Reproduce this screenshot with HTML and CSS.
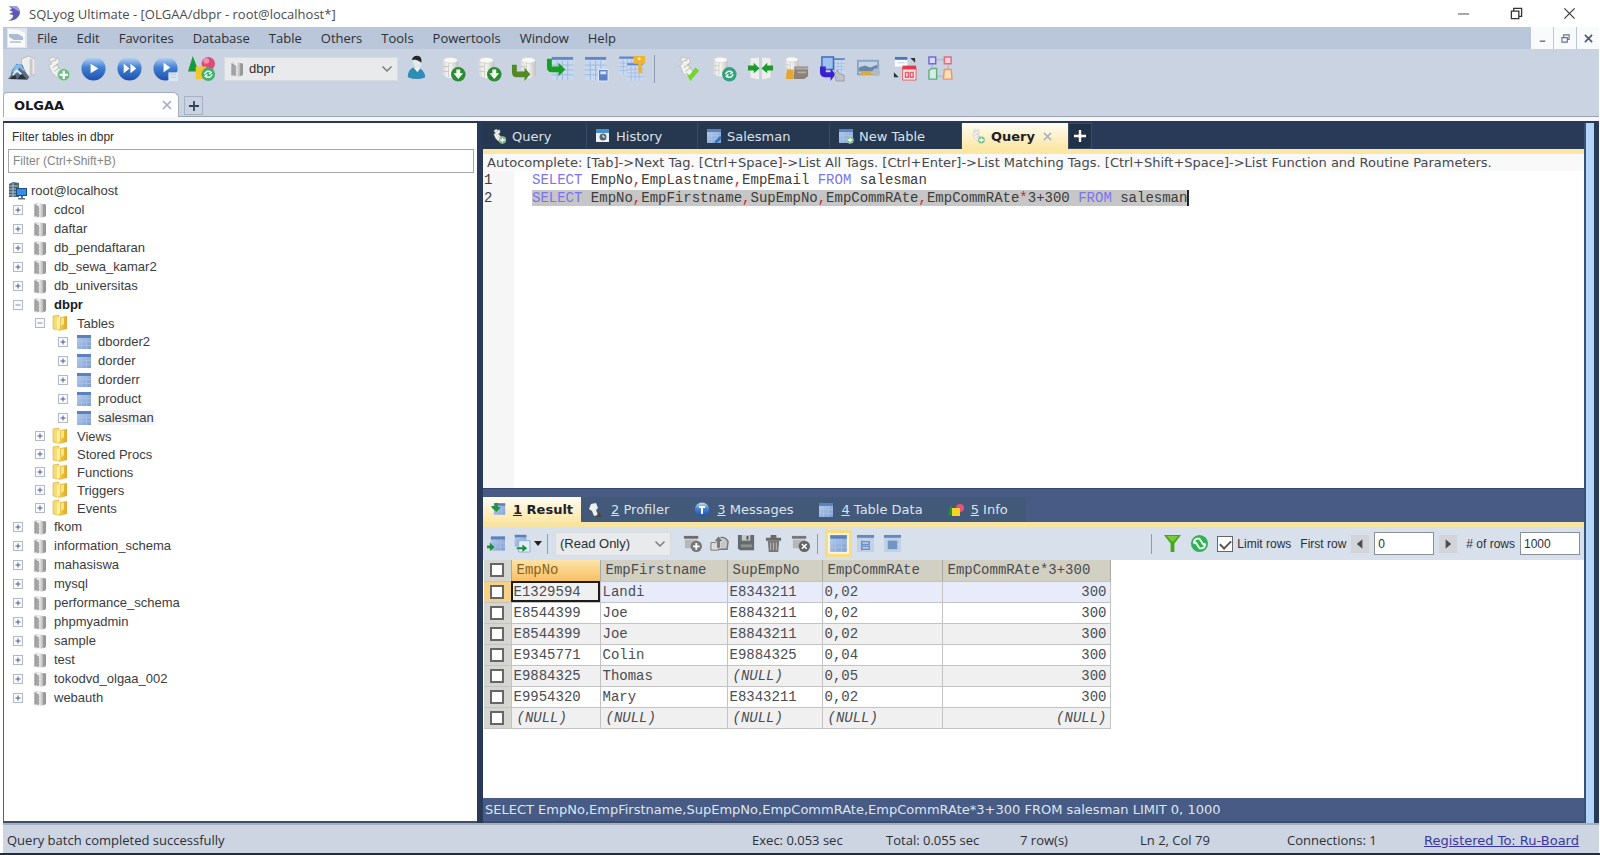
FILE: index.html
```html
<!DOCTYPE html>
<html lang="en">
<head>
    <meta charset="UTF-8">
    <meta name="viewport" content="width=device-width, initial-scale=1.0">
    <title>SQLyog Ultimate - [OLGAA/dbpr - root@localhost*]</title>
    <link rel="stylesheet" href="styles.css">
</head>
<body>
    <!-- Shared icons -->
    <svg class="sprite" aria-hidden="true">
        <defs>
            <linearGradient id="g-steel"><stop offset="0" stop-color="#b5b5b5"/><stop offset=".4" stop-color="#f4f4f4"/><stop offset="1" stop-color="#8c8c8c"/></linearGradient>
            <linearGradient id="g-paper"><stop offset="0" stop-color="#d9d9d6"/><stop offset=".4" stop-color="#fafaf8"/><stop offset="1" stop-color="#c2c2be"/></linearGradient>
            <linearGradient id="g-blue" x2="0" y2="1"><stop offset="0" stop-color="#c6ddf6"/><stop offset=".45" stop-color="#4381d4"/><stop offset="1" stop-color="#1f50ae"/></linearGradient>
            <linearGradient id="g-cell" x2="1" y2="1"><stop offset="0" stop-color="#b8cdec"/><stop offset="1" stop-color="#7f9fd2"/></linearGradient>
            <linearGradient id="g-gold"><stop offset="0" stop-color="#f7d860"/><stop offset="1" stop-color="#e0a92a"/></linearGradient>
        </defs>
        <symbol id="i-db" viewBox="0 0 14 16">
            <path d="M1 3q0-2 4-2l5 1q3 0 3 1v10q0 2-5 2.500Q1 15.500 1 14z" fill="url(#g-steel)"/>
            <path d="M3 3v11M5 4v11" stroke="#808080" stroke-width="1.200"/>
            <path d="M1.500 7h5M1.500 10h5M1.500 13h5" stroke="#a5a5a5"/>
            <path d="M11 2.500v12" stroke="#9b9b9b" stroke-width="2"/>
        </symbol>
        <symbol id="i-folder" viewBox="0 0 16 18">
            <path d="M1 2l6-1v15l-6-1z" fill="#f6dc72" stroke="#d7ac35" stroke-width=".6"/>
            <path d="M5 4l3-1 7-1v13l-8 2-2-2z" fill="url(#g-gold)"/>
            <path d="M5 4l3-1v11l-3 2z" fill="#fff0a6"/><path d="M9 4l3-.5V10l-3 2z" fill="#fbe58c"/>
        </symbol>
        <symbol id="i-table" viewBox="0 0 16 16">
            <rect x="1" y="1" width="14" height="14" fill="url(#g-cell)"/>
            <rect x="1" y="1" width="14" height="3" fill="#5c82be"/>
            <path d="M1 7.500h14M1 11.500h14M5.500 4v11M10.500 4v11" stroke="#a9c1e6" stroke-width=".7"/>
        </symbol>
        <symbol id="i-host" viewBox="0 0 19 18">
            <path d="M1 2l4-2 6 1v14H1z" fill="#4a6377"/><path d="M1 4h9M1 7h9M1 10h9M1 13h9M5 1v14" stroke="#a9c1cf"/>
            <rect x="8" y="6" width="11" height="8" fill="#274a78"/><rect x="9" y="7" width="9" height="6" fill="#2f8fee"/>
            <path d="M13 14v2h-3v1.500h7V16h-2v-2z" fill="#5b7388"/>
        </symbol>
        <symbol id="i-plus-box" viewBox="0 0 10 10">
            <rect x=".5" y=".5" width="9" height="9" fill="#fafbfd" stroke="#b3b8c4"/><path d="M2.500 5h5M5 2.500v5" stroke="#4a5d98"/>
        </symbol>
        <symbol id="i-minus-box" viewBox="0 0 10 10">
            <rect x=".5" y=".5" width="9" height="9" fill="#fafbfd" stroke="#b3b8c4"/><path d="M2.500 5h5" stroke="#7f8eb8"/>
        </symbol>
        <symbol id="i-query" viewBox="0 0 28 28">
            <path d="M5 5l4-3 3 2 3-1 1 5-3 2 6 8-6 5-5-5-3-7 3-2z" fill="#f1f1ee" stroke="#b5b8b8" stroke-width=".8"/>
            <path d="M7 7l6-2M9 13l6-4M11 17l5-4" stroke="#b4b6b4"/>
        </symbol>
        <symbol id="i-cyl" viewBox="0 0 28 28">
            <path d="M4 5q1-3 8-3t8 4v14q-1 4-7 4t-9-4z" fill="url(#g-paper)"/><ellipse cx="12" cy="5.500" rx="7.500" ry="3" fill="#f8f8f6" stroke="#c6c6c2" stroke-width=".6"/>
            <path d="M4 12h6M4 17h6M10 8v15" stroke="#c9c9c5"/>
        </symbol>
        <symbol id="i-sheet" viewBox="0 0 28 28">
            <rect x="4" y="2" width="22" height="24" fill="#c9d9ef"/><rect x="4" y="2" width="22" height="3" fill="#5f89c8"/>
            <path d="M4 10.500h22M4 15.500h22M4 20.500h22M9.500 6v20M15 6v20M20.500 6v20" stroke="#9db8df"/>
        </symbol>
        <symbol id="i-chevron" viewBox="0 0 12 8"><path d="M1.500 1.500L6 6l4.500-4.500" fill="none" stroke="#777" stroke-width="1.400"/></symbol>
        <symbol id="i-badge-plus" viewBox="0 0 14 14"><circle cx="7" cy="7" r="6" fill="#6fb983" stroke="#b9dec0"/><path d="M7 3v8M3 7h8" stroke="#fff" stroke-width="2.200"/></symbol>
        <symbol id="i-badge-down" viewBox="0 0 16 16"><circle cx="8" cy="8" r="7.500" fill="#2c8c33"/><path d="M6 3h4v4h3l-5 6-5-6h3z" fill="#f3fff3"/></symbol>
    </svg>

    <header class="title-bar">
        <svg class="app-logo" viewBox="0 0 16 18"><path d="M3 1h7q4 2 4 7-1 7-12 8 6-3 5-6l-4-1 4-2-4-2 3-1z" fill="#5f58b4"/><path d="M3 1h7q3 1 4 6L9 4z" fill="#a49fdc"/></svg>
        <h1>SQLyog Ultimate - [OLGAA/dbpr - root@localhost*]</h1>
        <div class="window-buttons">
            <button aria-label="Minimize"><svg viewBox="0 0 14 14"><path d="M1 7.500h12" stroke="#444"/></svg></button>
            <button aria-label="Restore"><svg viewBox="0 0 14 14"><path d="M1.500 4.500h8v8h-8zM4 4V1.500h8.500V10H10" fill="none" stroke="#333" stroke-width="1.400"/></svg></button>
            <button aria-label="Close"><svg viewBox="0 0 14 14"><path d="M1.500 1.500l11 11M12.500 1.500l-11 11" stroke="#333" stroke-width="1.200"/></svg></button>
        </div>
    </header>

    <nav class="menu-bar">
        <svg class="doc-icon" viewBox="0 0 20 20"><path d="M0 0h20v20H0z" fill="#dfe5ee"/><path d="M1 1l11 1 6 3v14H1z" fill="#f7f9fb"/><path d="M2 6h9l5 3v3H7l-5-3z" fill="#a9bdd4"/><path d="M3 14h11" stroke="#c4cdd8" stroke-width="2"/></svg>
        <button>File</button>
        <button>Edit</button>
        <button>Favorites</button>
        <button>Database</button>
        <button>Table</button>
        <button>Others</button>
        <button>Tools</button>
        <button>Powertools</button>
        <button>Window</button>
        <button>Help</button>
        <div class="child-buttons">
            <button aria-label="Minimize child"><svg viewBox="0 0 10 10"><path d="M2 8h6" stroke="#5d6a80" stroke-width="1.500"/></svg></button>
            <button aria-label="Restore child"><svg viewBox="0 0 10 10"><path d="M1 4h6v5H1zM3 4V1h6v5H7" fill="none" stroke="#5d7090" stroke-width="1.200"/></svg></button>
            <button aria-label="Close child"><svg viewBox="0 0 10 10"><path d="M1 1l8 8M9 1L1 9" stroke="#46536b" stroke-width="1.700"/></svg></button>
        </div>
    </nav>

    <div class="toolbar">
        <button aria-label="New connection"><svg viewBox="0 0 28 28"><path d="M14 4l7-3 7 3v16l-6 2-8-3z" fill="#eee" stroke="#bbb"/><path d="M24 4v17" stroke="#c9c9c9" stroke-width="3"/><path d="M0 25l3-4 1-5 5-7 6 1 3 7 4 6-2 3z" fill="#5b6c80"/><path d="M4 18l4-8 5-1 5 8-3-1-3-3-3 6z" fill="#7fbcf0"/><path d="M2 25l5-5 2 5zM10 25l4-6 5 6z" fill="#29323e"/><path d="M5 21l4-5 5 4" fill="none" stroke="#e3ebf3" stroke-width="2"/></svg></button>
        <button aria-label="New query"><svg viewBox="0 0 28 28"><use href="#i-query"/><use href="#i-badge-plus" x="13" y="13" width="15" height="15"/></svg></button>
        <button aria-label="Execute query"><svg viewBox="0 0 28 28"><circle cx="14" cy="14" r="12.500" fill="url(#g-blue)"/><path d="M11 9l8 5-8 5z" fill="#fff"/></svg></button>
        <button aria-label="Execute all"><svg viewBox="0 0 28 28"><circle cx="14" cy="14" r="12.500" fill="url(#g-blue)"/><path d="M8 9l6 5-6 5zM15 9l6 5-6 5z" fill="#fff"/></svg></button>
        <button aria-label="Execute and edit"><svg viewBox="0 0 28 28"><circle cx="14" cy="14" r="12.500" fill="url(#g-blue)"/><path d="M12 8l7 5-7 5z" fill="#fff"/><path d="M17 18h10v9H17z" fill="#dce6f3"/><path d="M19 20h6M19 23h6" stroke="#b7c6da"/></svg></button>
        <button aria-label="Refresh objects"><svg viewBox="0 0 28 28"><path d="M5 1l6 16H0z" fill="#179b3a"/><circle cx="21" cy="9" r="7" fill="#df4c7b"/><circle cx="19" cy="6" r="3" fill="#f093b2"/><path d="M8 12h11v13H8z" fill="#f5c629"/><circle cx="21" cy="20" r="7" fill="#42ae70"/><path d="M17 20q2-5 7-2l-2 2M25 20q-2 5-7 2l2-2" fill="none" stroke="#e5ffec" stroke-width="1.600"/></svg></button>

        <div class="combo database-combo">
            <svg class="combo-icon"><use href="#i-db"/></svg>
            <select aria-label="Database"><option>dbpr</option></select>
            <svg class="combo-arrow"><use href="#i-chevron"/></svg>
        </div>

        <button aria-label="User manager"><svg viewBox="0 0 28 28"><path d="M10 7l4-4 5 3v5l-3 3-4-2z" fill="#e6e9ea"/><path d="M9 5q2-5 7-4 4 1 3 7l-3-2-3-1z" fill="#25262a"/><path d="M5 23q0-8 6-10l4 4 3-3q5 4 5 9-8 4-18 0z" fill="#2f8db4"/><path d="M11 13l4 5 3-5z" fill="#eaf4f8"/></svg></button>
        <button aria-label="Import"><svg viewBox="0 0 28 28"><use href="#i-cyl"/><use href="#i-badge-down" x="12" y="12" width="16" height="16"/></svg></button>
        <button aria-label="Restore from dump"><svg viewBox="0 0 28 28"><use href="#i-cyl"/><use href="#i-badge-down" x="12" y="12" width="16" height="16"/></svg></button>
        <button aria-label="Backup database"><svg viewBox="0 0 28 28"><use href="#i-cyl" x="6"/><path d="M1 10h5v7h8v-4l6 7-6 7v-4H5q-4 0-4-5z" fill="#528a25"/></svg></button>
        <button aria-label="Export table"><svg viewBox="0 0 28 28"><use href="#i-sheet" x="1"/><path d="M0 4h5v8h7V8l7 7-7 7v-4H5q-5 0-5-5z" fill="#17a020"/></svg></button>
        <button aria-label="Table data"><svg viewBox="0 0 28 28"><use href="#i-sheet" x="-2"/><path d="M16 15h10v12H16z" fill="#5d81c6" stroke="#e8effa"/><path d="M18 17h6v3h-6z" fill="#d8e4f7"/></svg></button>
        <button aria-label="Manage indexes"><svg viewBox="0 0 28 28"><use href="#i-sheet" x="-3" width="22" height="22"/><use href="#i-sheet" x="5" y="7" width="22" height="21"/><path d="M15 1h12v8h-3v10l-4-1V9h-5z" fill="#eeb42f"/><circle cx="21" cy="4" r="1.500" fill="#fff2c1"/></svg></button>
        <span class="separator"></span>
        <button aria-label="Format query"><svg viewBox="0 0 28 28"><use href="#i-query"/><path d="M11 18l4 3 6-8 4 3-9 11z" fill="#75d62c"/></svg></button>
        <button aria-label="Database sync"><svg viewBox="0 0 28 28"><use href="#i-cyl" x="-1" width="26" height="26"/><circle cx="19" cy="20" r="7.500" fill="#35a17c"/><path d="M15 20q2-5 7-2l-2 2M23 20q-2 5-7 2l2-2" fill="none" stroke="#e5fff2" stroke-width="1.600"/></svg></button>
        <button aria-label="Schema sync"><svg viewBox="0 0 28 28"><path d="M3 3l10-1v24l-10-2zM15 2l10 1v21l-10 2z" fill="#eee" stroke="#cdd0d4"/><path d="M1 11h6V8l6 6-6 5v-3H1zM27 11h-6V8l-6 6 6 5v-3h6z" fill="#1c9a2c"/></svg></button>
        <button aria-label="Notification service"><svg viewBox="0 0 28 28"><use href="#i-cyl" x="-1" width="24" height="24"/><path d="M12 12h14v10l-4 3H11z" fill="#8c8178"/><path d="M13 14h13M15 18h9" stroke="#b5aca3" stroke-width="2"/><path d="M4 15h7v10H3z" fill="#e3a632"/></svg></button>
        <button aria-label="Copy to host"><svg viewBox="0 0 28 28"><use href="#i-sheet" x="10" width="18" height="22"/><path d="M3 2h12v13H3z" fill="#9fc1ed" stroke="#3e68bd" stroke-width="1.500"/><path d="M1 12h6v6h5v-4l5 6-5 7v-4H6q-5 0-5-5z" fill="#3a20d2"/><path d="M18 27l-2-7 3-4 2 3 5 2v6z" fill="#bfc2c9" stroke="#7c8087" stroke-width=".6"/></svg></button>
        <button aria-label="Scheduled backup"><svg viewBox="0 0 28 28"><path d="M2 5h23v16H2z" fill="#8da5c4"/><path d="M4 7h19v12H4z" fill="#c4d3e6"/><path d="M4 13l6-2 6 2 7-3v7H4z" fill="#6a87aa"/><path d="M6 17h11v4H6z" fill="#d7ac38"/><circle cx="22" cy="18" r="4" fill="#b2bac4"/></svg></button>
        <button aria-label="Schedule"><svg viewBox="0 0 28 28"><path d="M4 2h13v10H4z" fill="#fbfbfe"/><path d="M4 2h13v3H4z" fill="#4778bd"/><path d="M7 8h7" stroke="#bcc9dc"/><path d="M12 13h14v13H12z" fill="#fbe5e8" stroke="#e4606a"/><path d="M12 11h14v4H12z" fill="#dc3d49"/><path d="M15 18h3v5h-3zM20 18h3v5h-3z" fill="none" stroke="#e4606a" stroke-width="1.500"/><path d="M20 3h5v5zM3 18v5h5z" fill="#333"/></svg></button>
        <button aria-label="Schema designer"><svg viewBox="0 0 28 28"><path d="M8 5h14M5 8v14M22 8v12M8 22h14" stroke="#a9b4c5"/><path d="M2 2h7v7H2z" fill="#dad8fa" stroke="#6f69dc" stroke-width="1.500"/><path d="M18 2h7v7h-7z" fill="#f4d2d7" stroke="#d86f80" stroke-width="1.500"/><path d="M2 16l3-2h5v11H2z" fill="#d5eee0" stroke="#5faf87" stroke-width="1.500"/><path d="M18 15h7l1 10h-9z" fill="#f7dfc5" stroke="#e99d52" stroke-width="1.500"/></svg></button>
    </div>

    <div class="connection-tabs">
        <div class="connection-tab">
            <span>OLGAA</span>
            <button aria-label="Close connection"><svg viewBox="0 0 10 10"><path d="M1 1l8 8M9 1L1 9" stroke="#a2adc9" stroke-width="1.700"/></svg></button>
        </div>
        <button class="add-connection" aria-label="Add connection"><svg viewBox="0 0 12 12"><path d="M6 1v10M1 6h10" stroke="#33435c" stroke-width="1.800"/></svg></button>
    </div>

    <main class="workspace">
        <aside class="sidebar">
            <label for="filter">Filter tables in dbpr</label>
            <input id="filter" class="filter" type="text" placeholder="Filter (Ctrl+Shift+B)">
            <ul class="tree">
                <li class="root"><svg class="host"><use href="#i-host"/></svg>root@localhost</li>
                <li><svg class="box"><use href="#i-plus-box"/></svg><svg class="db"><use href="#i-db"/></svg>cdcol</li>
                <li><svg class="box"><use href="#i-plus-box"/></svg><svg class="db"><use href="#i-db"/></svg>daftar</li>
                <li><svg class="box"><use href="#i-plus-box"/></svg><svg class="db"><use href="#i-db"/></svg>db_pendaftaran</li>
                <li><svg class="box"><use href="#i-plus-box"/></svg><svg class="db"><use href="#i-db"/></svg>db_sewa_kamar2</li>
                <li><svg class="box"><use href="#i-plus-box"/></svg><svg class="db"><use href="#i-db"/></svg>db_universitas</li>
                <li class="current"><svg class="box"><use href="#i-minus-box"/></svg><svg class="db"><use href="#i-db"/></svg>dbpr</li>
                <li class="folder"><svg class="box"><use href="#i-minus-box"/></svg><svg class="dir"><use href="#i-folder"/></svg>Tables</li>
                <li class="leaf"><svg class="box"><use href="#i-plus-box"/></svg><svg class="tbl"><use href="#i-table"/></svg>dborder2</li>
                <li class="leaf"><svg class="box"><use href="#i-plus-box"/></svg><svg class="tbl"><use href="#i-table"/></svg>dorder</li>
                <li class="leaf"><svg class="box"><use href="#i-plus-box"/></svg><svg class="tbl"><use href="#i-table"/></svg>dorderr</li>
                <li class="leaf"><svg class="box"><use href="#i-plus-box"/></svg><svg class="tbl"><use href="#i-table"/></svg>product</li>
                <li class="leaf"><svg class="box"><use href="#i-plus-box"/></svg><svg class="tbl"><use href="#i-table"/></svg><span class="picked">salesman</span></li>
                <li class="folder"><svg class="box"><use href="#i-plus-box"/></svg><svg class="dir"><use href="#i-folder"/></svg>Views</li>
                <li class="folder"><svg class="box"><use href="#i-plus-box"/></svg><svg class="dir"><use href="#i-folder"/></svg>Stored Procs</li>
                <li class="folder"><svg class="box"><use href="#i-plus-box"/></svg><svg class="dir"><use href="#i-folder"/></svg>Functions</li>
                <li class="folder"><svg class="box"><use href="#i-plus-box"/></svg><svg class="dir"><use href="#i-folder"/></svg>Triggers</li>
                <li class="folder"><svg class="box"><use href="#i-plus-box"/></svg><svg class="dir"><use href="#i-folder"/></svg>Events</li>
                <li><svg class="box"><use href="#i-plus-box"/></svg><svg class="db"><use href="#i-db"/></svg>fkom</li>
                <li><svg class="box"><use href="#i-plus-box"/></svg><svg class="db"><use href="#i-db"/></svg>information_schema</li>
                <li><svg class="box"><use href="#i-plus-box"/></svg><svg class="db"><use href="#i-db"/></svg>mahasiswa</li>
                <li><svg class="box"><use href="#i-plus-box"/></svg><svg class="db"><use href="#i-db"/></svg>mysql</li>
                <li><svg class="box"><use href="#i-plus-box"/></svg><svg class="db"><use href="#i-db"/></svg>performance_schema</li>
                <li><svg class="box"><use href="#i-plus-box"/></svg><svg class="db"><use href="#i-db"/></svg>phpmyadmin</li>
                <li><svg class="box"><use href="#i-plus-box"/></svg><svg class="db"><use href="#i-db"/></svg>sample</li>
                <li><svg class="box"><use href="#i-plus-box"/></svg><svg class="db"><use href="#i-db"/></svg>test</li>
                <li><svg class="box"><use href="#i-plus-box"/></svg><svg class="db"><use href="#i-db"/></svg>tokodvd_olgaa_002</li>
                <li><svg class="box"><use href="#i-plus-box"/></svg><svg class="db"><use href="#i-db"/></svg>webauth</li>
            </ul>
        </aside>

        <section class="content">
            <div class="query-tabs">
                <button class="tab tab-query"><svg viewBox="0 0 28 28"><use href="#i-query"/><use href="#i-badge-plus" x="13" y="14" width="14" height="14"/></svg>Query</button>
                <button class="tab tab-history"><svg viewBox="0 0 16 16"><path d="M1 2h13v12H1z" fill="#edf2f8"/><path d="M1 1h13v4H1z" fill="#4391cf"/><circle cx="8" cy="9" r="3.500" fill="#5b6675"/><path d="M8 7v2h2" stroke="#fff" fill="none"/></svg>History</button>
                <button class="tab tab-table"><svg viewBox="0 0 16 16"><use href="#i-table"/><path d="M9 13l5-5 2 2-5 5H9z" fill="#2f73c3"/></svg>Salesman</button>
                <button class="tab tab-table"><svg viewBox="0 0 16 16"><use href="#i-table"/><use href="#i-badge-plus" x="8" y="8" width="8" height="8"/></svg>New Table</button>
                <button class="tab active"><svg viewBox="0 0 28 28"><use href="#i-query"/><use href="#i-badge-plus" x="13" y="14" width="14" height="14"/></svg>Query<svg class="tab-close" viewBox="0 0 10 10"><path d="M1 1l8 8M9 1L1 9" stroke="#a9b1c2" stroke-width="1.700"/></svg></button>
                <button class="add-tab" aria-label="New tab"><svg viewBox="0 0 12 12"><path d="M6 0v12M0 6h12" stroke="#fff" stroke-width="2.400"/></svg></button>
            </div>
            <p class="hint">Autocomplete: [Tab]-&gt;Next Tag. [Ctrl+Space]-&gt;List All Tags. [Ctrl+Enter]-&gt;List Matching Tags. [Ctrl+Shift+Space]-&gt;List Function and Routine Parameters.</p>
            <div class="editor">
                <ol class="gutter"><li>1</li><li>2</li></ol>
                <pre class="code"><span class="kw">SELECT</span> EmpNo<i>,</i>EmpLastname<i>,</i>EmpEmail <span class="kw">FROM</span> salesman
<span class="selected"><span class="kw">SELECT</span> EmpNo<i>,</i>EmpFirstname<i>,</i>SupEmpNo<i>,</i>EmpCommRAte<i>,</i>EmpCommRAte<i>*</i>3+300 <span class="kw">FROM</span> salesman</span></pre>
            </div>

            <div class="results">
                <div class="result-tabs">
                    <button class="rtab active"><svg viewBox="0 0 16 16"><use href="#i-table" x="3" width="13" height="14"/><path d="M1 4h4V1h3v4h3L6.500 10 2 6z" fill="#1b9a3a"/></svg><span><u>1</u> Result</span></button>
                    <button class="rtab"><svg viewBox="0 0 16 16"><path d="M3 2l5-1 2 5-2 2 2 5-4 1-2-5-3-2z" fill="#eef0ee"/><path d="M8 15l3-5 3 5z" fill="#4c4638"/></svg><span><u>2</u> Profiler</span></button>
                    <button class="rtab"><svg viewBox="0 0 16 16"><circle cx="8" cy="7.500" r="7" fill="url(#g-blue)"/><path d="M7 6h2v6H7zM5 4h6v2H5z" fill="#fff"/></svg><span><u>3</u> Messages</span></button>
                    <button class="rtab"><svg viewBox="0 0 16 16"><use href="#i-table"/></svg><span><u>4</u> Table Data</span></button>
                    <button class="rtab"><svg viewBox="0 0 16 16"><path d="M3 3l3 10H0z" fill="#199c34"/><circle cx="12" cy="6" r="4" fill="#e4537a"/><path d="M4 6h8v8H4z" fill="#f4d325"/></svg><span><u>5</u> Info</span></button>
                </div>

                <div class="result-toolbar">
                    <button aria-label="Export rows"><svg viewBox="0 0 20 20"><use href="#i-table" x="3" width="17" height="20"/><path d="M0 12h3V9l5 5-5 4v-3H0z" fill="#17923a"/></svg></button>
                    <button class="export-menu" aria-label="Copy rows"><svg viewBox="0 0 20 20"><use href="#i-table" x="1" width="16" height="14"/><path d="M7 7h12v12H7z" fill="#e3ecf8" stroke="#96aed3"/><path d="M5 14h6v-3l5 4-5 4v-3H5z" fill="#17923a"/></svg><span class="caret"></span></button>
                    <span class="separator"></span>
                    <div class="combo mode-combo">
                        <select aria-label="Edit mode"><option>(Read Only)</option></select>
                        <svg class="combo-arrow"><use href="#i-chevron"/></svg>
                    </div>
                    <button aria-label="Insert row"><svg viewBox="0 0 20 20"><path d="M1 2h15v3H1z" fill="#6d6d6d"/><path d="M2 6h13v9H2z" fill="#b4b7bb"/><circle cx="14" cy="13" r="6" fill="#777"/><path d="M14 9.500v7M10.500 13h7" stroke="#fff" stroke-width="2"/></svg></button>
                    <button aria-label="Duplicate row"><svg viewBox="0 0 20 20"><path d="M8 5q8-4 11 3l-1 8H9" fill="#c5c7c9" stroke="#777" stroke-width="1.500"/><path d="M1 9h8v8H1z" fill="#ddd" stroke="#777"/><path d="M7 15V8H4l5-6 5 6h-3v7z" fill="#777" stroke="#eee" stroke-width=".7"/></svg></button>
                    <button aria-label="Save changes"><svg viewBox="0 0 20 20"><path d="M1 1h17v16H3l-2-2z" fill="#666a6d"/><path d="M5 1h9v6H5z" fill="#c5c8ca"/><path d="M10 2h2v4h-2z" fill="#555"/><path d="M4 11h12v3H4z" fill="#8d9194"/></svg></button>
                    <button aria-label="Delete row"><svg viewBox="0 0 20 20"><path d="M2 4h16v3H2zM7 1h6v3H7z" fill="#696969"/><path d="M4 7h12l-1 12H5z" fill="#777"/><path d="M7 9v8M10 9v8M13 9v8" stroke="#bbb"/></svg></button>
                    <button aria-label="Cancel changes"><svg viewBox="0 0 20 20"><path d="M1 2h15v3H1z" fill="#777"/><path d="M2 6h13v9H2z" fill="#b4b7bb"/><circle cx="14" cy="13" r="6" fill="#666"/><path d="M11.500 10.500l5 5M16.500 10.500l-5 5" stroke="#fff" stroke-width="1.700"/></svg></button>
                    <span class="separator"></span>
                    <button class="chosen" aria-label="Grid view"><svg viewBox="0 0 20 20"><use href="#i-table" width="20" height="20"/></svg></button>
                    <button aria-label="Form view"><svg viewBox="0 0 20 20"><path d="M1 2h18v17H1z" fill="#c1d1e8"/><path d="M1 1h18v3H1z" fill="#6489c0"/><path d="M6 7v10M6 8h8v3H6M6 13h8v3H6" fill="none" stroke="#7191c2" stroke-width="1.500"/></svg></button>
                    <button aria-label="Text view"><svg viewBox="0 0 20 20"><path d="M1 2h18v17H1z" fill="#c1d1e8"/><path d="M1 1h18v3H1z" fill="#6489c0"/><path d="M5 7h10v9H5z" fill="#7293c4"/></svg></button>

                    <div class="paging">
                        <span class="separator"></span>
                        <button aria-label="Filter rows"><svg viewBox="0 0 20 20"><path d="M1 1h18l-7 9v9H8v-9z" fill="#46a51d"/><path d="M4 2h12l-5 6H9z" fill="#7bc73f"/></svg></button>
                        <button aria-label="Refresh rows"><svg viewBox="0 0 20 20"><circle cx="10" cy="10" r="9" fill="#2db356"/><path d="M4 10q0-6 6-5l4 6 2-1M16 10q0 6-6 5L6 9l-2 1" fill="none" stroke="#effff2" stroke-width="2"/></svg></button>
                        <label class="limit"><input type="checkbox" checked>Limit rows</label>
                        <label class="first-label" for="first-row">First row</label>
                        <button class="step" aria-label="Previous rows"><svg viewBox="0 0 10 12"><path d="M8 0v12L1 6z" fill="#4b4f53"/></svg></button>
                        <input id="first-row" class="number" type="text" value="0">
                        <button class="step" aria-label="Next rows"><svg viewBox="0 0 10 12"><path d="M2 0v12l7-6z" fill="#4b4f53"/></svg></button>
                        <label class="count-label" for="row-count"># of rows</label>
                        <input id="row-count" class="number" type="text" value="1000">
                    </div>
                </div>

                <div class="grid-area">
                    <table class="grid">
                        <thead>
                            <tr><th class="check"><input type="checkbox" aria-label="Select all"></th><th class="c-no sorted">EmpNo</th><th class="c-name">EmpFirstname</th><th class="c-sup">SupEmpNo</th><th class="c-rate">EmpCommRAte</th><th class="c-calc">EmpCommRAte*3+300</th></tr>
                        </thead>
                        <tbody>
                            <tr class="focused"><td class="check"><input type="checkbox" aria-label="Row 1"></td><td class="cell-focus">E1329594</td><td>Landi</td><td>E8343211</td><td>0,02</td><td class="num">300</td></tr>
                            <tr><td class="check"><input type="checkbox" aria-label="Row 2"></td><td>E8544399</td><td>Joe</td><td>E8843211</td><td>0,02</td><td class="num">300</td></tr>
                            <tr><td class="check"><input type="checkbox" aria-label="Row 3"></td><td>E8544399</td><td>Joe</td><td>E8843211</td><td>0,02</td><td class="num">300</td></tr>
                            <tr><td class="check"><input type="checkbox" aria-label="Row 4"></td><td>E9345771</td><td>Colin</td><td>E9884325</td><td>0,04</td><td class="num">300</td></tr>
                            <tr><td class="check"><input type="checkbox" aria-label="Row 5"></td><td>E9884325</td><td>Thomas</td><td class="null">(NULL)</td><td>0,05</td><td class="num">300</td></tr>
                            <tr><td class="check"><input type="checkbox" aria-label="Row 6"></td><td>E9954320</td><td>Mary</td><td>E8343211</td><td>0,02</td><td class="num">300</td></tr>
                            <tr><td class="check"><input type="checkbox" aria-label="Row 7"></td><td class="null">(NULL)</td><td class="null">(NULL)</td><td class="null">(NULL)</td><td class="null">(NULL)</td><td class="null num">(NULL)</td></tr>
                        </tbody>
                    </table>
                </div>
                <div class="last-query">SELECT EmpNo,EmpFirstname,SupEmpNo,EmpCommRAte,EmpCommRAte*3+300 FROM salesman LIMIT 0, 1000</div>
            </div>
        </section>
    </main>

    <footer class="status-bar">
        <span class="message">Query batch completed successfully</span>
        <span class="exec">Exec: 0.053 sec</span>
        <span class="total">Total: 0.055 sec</span>
        <span class="rows">7 row(s)</span>
        <span class="position">Ln 2, Col 79</span>
        <span class="connections">Connections: 1</span>
        <a href="#">Registered To: Ru-Board</a>
    </footer>
</body>
</html>
```
FILE: styles.css
```css
* {
    box-sizing: border-box;
}

body {
    margin: 0;
    padding: 0 1px 0 3px;
    min-height: 100vh;
    display: flex;
    flex-direction: column;
    background: white;
    color: #2c2f36;
    font-family: "Liberation Sans", Arial, sans-serif;
    font-size: 13px;
    border-bottom: 2px solid #252b38;
}

button {
    padding: 0;
    border: none;
    background: none;
    font: inherit;
    color: inherit;
}

svg {
    display: block;
    flex: none;
}

.sprite {
    position: absolute;
    width: 0;
    height: 0;
}

/* Title bar */
.title-bar {
    display: flex;
    align-items: center;
    height: 27px;
    padding-left: 3px;
    font-family: "Open Sans", sans-serif;
}

.app-logo {
    width: 16px;
    height: 18px;
}

.title-bar h1 {
    margin: 0 0 0 7px;
    font-size: 13px;
    font-weight: normal;
    color: #4b4b50;
}

.window-buttons {
    display: flex;
    margin-left: auto;
    padding-right: 3px;
}

.window-buttons button {
    width: 53px;
    height: 26px;
    display: flex;
    align-items: center;
    justify-content: center;
}

.window-buttons svg {
    width: 13px;
    height: 13px;
}

/* Menu bar */
.menu-bar {
    display: flex;
    align-items: center;
    height: 22px;
    padding-left: 4px;
    background: #bac6da;
    font-family: "Open Sans", sans-serif;
}

.doc-icon {
    width: 20px;
    height: 20px;
}

.menu-bar > button {
    padding: 0 9px 0 10px;
}

.child-buttons {
    display: flex;
    gap: 1px;
    height: 22px;
    margin-left: auto;
}

.child-buttons button {
    width: 22px;
    display: flex;
    align-items: center;
    justify-content: center;
    background: #f8fafc;
}

.child-buttons svg {
    width: 9px;
    height: 9px;
}

/* Main toolbar */
.toolbar {
    display: flex;
    align-items: center;
    height: 39px;
    background: #cad3e2;
}

.toolbar button {
    width: 36px;
    height: 36px;
    display: flex;
    align-items: center;
    justify-content: center;
}

.toolbar svg {
    width: 27px;
    height: 27px;
}

.separator {
    flex: none;
    width: 1px;
    background: #8f9bb0;
}

.toolbar .separator {
    height: 28px;
    margin: 0 15px 0 4px;
}

.combo {
    position: relative;
}

.combo select {
    width: 100%;
    height: 24px;
    padding: 0 20px 0 4px;
    border: 1px solid #d9dcdf;
    border-radius: 0;
    background: #e9eaec;
    appearance: none;
    font: inherit;
    color: inherit;
}

.combo .combo-arrow {
    position: absolute;
    right: 5px;
    top: 8px;
    width: 12px;
    height: 8px;
}

.combo .combo-icon {
    position: absolute;
    left: 6px;
    top: 4px;
    width: 14px;
    height: 16px;
}

.database-combo {
    width: 174px;
    margin-left: 5px;
}

.database-combo select {
    padding-left: 24px;
}

/* Connection tabs */
.connection-tabs {
    display: flex;
    align-items: flex-end;
    height: 33px;
    background: #cad3e2;
    border-bottom: 4px solid #f5f7fa;
    box-shadow: inset 0 -1px #9ba3b2;
}

.connection-tab {
    display: flex;
    align-items: center;
    justify-content: space-between;
    width: 176px;
    height: 25px;
    padding: 0 6px 0 10px;
    border: 1px solid #a4adbc;
    border-bottom: none;
    border-radius: 4px 6px 0 0;
    background: white;
    font: bold 13px "DejaVu Sans", sans-serif;
    color: #17191d;
}

.connection-tab svg {
    width: 10px;
    height: 10px;
}

.add-connection {
    width: 19px;
    height: 19px;
    display: flex;
    align-items: center;
    justify-content: center;
    margin: 0 0 2px 5px;
    border: 1px solid #a7b1c1;
}

.add-connection svg {
    width: 12px;
    height: 12px;
}

/* Workspace */
.workspace {
    flex: 1;
    display: flex;
    background: #293a58;
    padding-top: 2px;
}

.sidebar {
    width: 474px;
    flex: none;
    padding: 6px 3px 0 4px;
    border-left: 1px solid #53617c;
    border-bottom: 2px solid #3c4d6c;
    background: white;
}

.sidebar label {
    display: block;
    padding-left: 4px;
    font-size: 12px;
    line-height: 16px;
}

.filter {
    width: 100%;
    height: 24px;
    margin-top: 4px;
    padding: 0 4px;
    border: 1px solid #a6a6a6;
    font: inherit;
    font-size: 12px;
}

.filter::placeholder {
    color: #858585;
}

.tree {
    margin: 8px 0 0;
    padding: 0;
    list-style: none;
    color: #3a3c42;
}

.tree li {
    display: flex;
    align-items: center;
    height: 19px;
    padding-left: 5px;
}

.tree .root {
    padding-left: 0;
}

.tree .current {
    font-weight: bold;
    color: #17181a;
}

.tree .folder {
    height: 18px;
    padding-left: 27px;
}

.tree .leaf {
    padding-left: 50px;
}

.host {
    width: 19px;
    height: 18px;
    margin-right: 4px;
}

.box {
    width: 10px;
    height: 10px;
}

.db {
    width: 14px;
    height: 16px;
    margin: 0 7px 0 10px;
}

.dir {
    width: 16px;
    height: 18px;
    margin: 0 9px 0 7px;
}

.tbl {
    width: 16px;
    height: 16px;
    margin: 0 6px 0 8px;
}

.picked {
    background: #f3f3f5;
}

.content {
    flex: 1;
    min-width: 0;
    display: flex;
    flex-direction: column;
    margin-left: 6px;
    margin-right: 5px;
    border-right: 8px solid #b4d6f6;
    box-shadow: inset -2px 0 #3a5078;
    padding-right: 2px;
}

/* Query tabs */
.query-tabs {
    display: flex;
    height: 31px;
    border-bottom: 5px solid #fbe6a4;
    background: #293a58;
    font-family: "DejaVu Sans", sans-serif;
    color: #dbe1ea;
}

.tab {
    display: flex;
    align-items: center;
    gap: 5px;
    height: 26px;
    padding: 0 0 0 8px;
    border-right: 1px solid #394a66;
    background: #26384f;
}

.tab svg {
    width: 16px;
    height: 16px;
}

.tab-query {
    width: 104px;
}

.tab-history {
    width: 111px;
}

.tab-table {
    width: 132px;
}

.tab.active {
    width: 106px;
    border: none;
    background: linear-gradient(#fffdf3, #fbe6a4);
    color: #202126;
    font-weight: bold;
}

.tab .tab-close {
    width: 9px;
    height: 9px;
    margin-left: 3px;
}

.add-tab {
    width: 24px;
    height: 26px;
    display: flex;
    align-items: center;
    justify-content: center;
    border: 1px solid #3b4c64;
    background: #203247;
}

.add-tab svg {
    width: 12px;
    height: 12px;
}

.hint {
    margin: 0;
    padding-left: 4px;
    background: #f9f9fa;
    color: #45474c;
    font: 13px/17px "DejaVu Sans", sans-serif;
    white-space: nowrap;
    overflow: hidden;
}

/* Editor */
.editor {
    flex: 1;
    display: flex;
    background: white;
    color: #3c3c3c;
    font: 14px/18px "Liberation Mono", "Courier New", monospace;
}

.gutter {
    width: 31px;
    margin: 0;
    padding: 0 0 0 1px;
    list-style: none;
    background: #f6f6f6;
}

.code {
    margin: 0 0 0 18px;
    font: inherit;
}

.code i {
    color: #d2232f;
    font-style: normal;
}

.kw {
    color: #7b74ee;
}

.selected {
    background: #c6c6c6;
    border-right: 2px solid #222;
}

/* Results */
.results {
    display: flex;
    flex-direction: column;
    height: 335px;
}

.result-tabs {
    display: flex;
    height: 39px;
    padding-top: 8px;
    border-top: 1px solid #33486f;
    border-bottom: 5px solid #f8e4a2;
    background: #475b84;
    font-family: "DejaVu Sans", sans-serif;
    color: #dee4ee;
}

.rtab {
    display: flex;
    align-items: center;
    gap: 7px;
    padding: 0 18px 0 7px;
    background: #42597a;
}

.rtab svg {
    width: 16px;
    height: 16px;
}

.rtab.active {
    padding-right: 8px;
    background: linear-gradient(#fffdf3, #fbe6a4);
    color: #202126;
    font-weight: bold;
}

.result-toolbar {
    display: flex;
    align-items: center;
    height: 33px;
    background: #d8e0ec;
}

.result-toolbar button {
    width: 27px;
    height: 27px;
    display: flex;
    align-items: center;
    justify-content: center;
}

.result-toolbar button svg {
    width: 19px;
    height: 19px;
}

.result-toolbar .export-menu {
    width: 34px;
    gap: 3px;
}

.caret {
    border: 4px solid transparent;
    border-top: 5px solid #222;
    border-bottom: none;
}

.result-toolbar .separator {
    height: 20px;
    margin: 0 7px 0 3px;
}

.mode-combo {
    width: 116px;
    margin-right: 8px;
}

.result-toolbar .chosen {
    border: 3px solid #f6dc85;
    background: #fbf3d6;
}

.paging {
    display: flex;
    align-items: center;
    margin-left: auto;
    padding-right: 4px;
    font-size: 12px;
}

.limit {
    display: flex;
    align-items: center;
    gap: 4px;
    margin: 0 9px 0 4px;
}

.limit input,
.grid input {
    flex: none;
    width: 14px;
    height: 14px;
    margin: 0;
    appearance: none;
    border: 2px solid #666;
    background: white;
}

.limit input {
    width: 16px;
    height: 16px;
    border-width: 1px;
}

.limit input:checked::before {
    content: "";
    display: block;
    width: 9px;
    height: 5px;
    margin: 3px 0 0 2px;
    border-left: 2px solid #555;
    border-bottom: 2px solid #555;
    transform: rotate(-45deg);
}

.result-toolbar .step {
    width: 18px;
    height: 18px;
    margin: 0 5px;
    background: #d2d4d8;
}

.result-toolbar .step svg {
    width: 8px;
    height: 12px;
}

.number {
    width: 60px;
    height: 23px;
    padding: 0 3px;
    border: 1px solid #8c8f95;
    background: white;
    color: inherit;
    font: inherit;
}

.count-label {
    margin: 0 5px 0 4px;
}

.grid-area {
    flex: 1;
    padding-left: 1px;
    background: white;
}

.grid {
    border-collapse: collapse;
    table-layout: fixed;
    width: 626px;
    font: 14px/20px "Liberation Mono", "Courier New", monospace;
    color: #4a4c52;
}

.grid th,
.grid td {
    height: 21px;
    padding: 0 3px 0 2px;
    border-right: 1px solid #c3c3c3;
    border-bottom: 1px solid #c3c3c3;
    text-align: left;
    font-weight: normal;
}

.grid th {
    padding-left: 5px;
    background: #d2d0c3;
    border-right-color: #aaa99f;
}

.grid tbody tr:nth-child(odd) {
    background: #f0f0f0;
}

.grid tbody .focused:nth-child(odd) {
    background: #e8ecfa;
}

.grid .check {
    width: 27px;
    padding: 0 0 0 6px;
    background: #d5d5d1;
    line-height: 0;
}

.grid .focused .check {
    background: #f5d188;
}

.c-no {
    width: 89px;
}

.c-name {
    width: 127px;
}

.c-sup {
    width: 95px;
}

.c-rate {
    width: 120px;
}

.c-calc {
    width: 168px;
}

.grid .sorted {
    background: linear-gradient(#fce3a8, #f8bf62);
    color: #8a6320;
}

.grid .cell-focus {
    outline: 2px solid #1c1c1c;
    outline-offset: -2px;
    background: #f0f0f0;
}

.grid .null {
    padding-left: 5px;
    font-style: italic;
}

.grid .num {
    text-align: right;
}

.last-query {
    height: 25px;
    padding-left: 2px;
    border-bottom: 2px solid #3c4d6c;
    background: #475b84;
    color: #dfe6f1;
    font: 13px/23px "DejaVu Sans", sans-serif;
    white-space: nowrap;
    overflow: hidden;
}

/* Status bar */
.status-bar {
    display: flex;
    align-items: center;
    height: 30px;
    padding: 2px 20px 0 4px;
    border-top: 2px solid #a7afbd;
    background: #cdd5e3;
    font-family: "Open Sans", sans-serif;
}

.status-bar .message {
    flex: 1;
}

.exec,
.total {
    width: 134px;
}

.rows {
    width: 120px;
}

.position {
    width: 147px;
}

.connections {
    width: 137px;
}

.status-bar a {
    color: #3a35a5;
    font-family: "DejaVu Sans", sans-serif;
}
```
